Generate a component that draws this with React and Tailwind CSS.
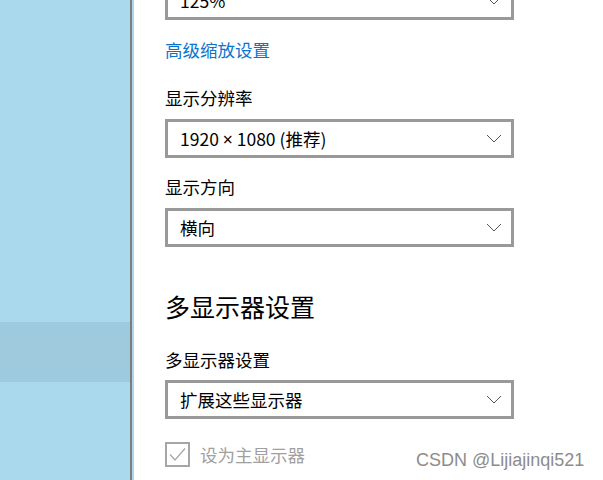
import React from 'react';

const font = { fontFamily: '"Noto Sans CJK SC", "Noto Sans", sans-serif' };

const Chevron = () => (
    <svg width="16" height="9" viewBox="0 0 16 9" className="shrink-0">
        <path d="M1 1 L8 8 L15 1" fill="none" stroke="#555" strokeWidth="1" />
    </svg>
);

// select box, Windows settings look
const Dropdown = ({ children, className = "" }) => (
    <div className={`w-[349px] h-[39px] border-[3px] border-[#999999] bg-white flex items-center justify-between pl-[12px] pr-[9px] ${className}`}>
        <span className="text-[17.5px] leading-[24px] text-black whitespace-nowrap">{children}</span>
        <Chevron />
    </div>
);

const App = () => {
    return (
        <div className="relative w-[603px] h-[480px] overflow-hidden flex bg-white" style={font}>
            {/* side nav */}
            <div className="w-[130px] shrink-0 bg-[#aad9ee] flex flex-col">
                <div className="h-[322px]" />
                <div className="h-[60px] bg-[#9fcadd]" />
            </div>
            <div className="w-[2px] shrink-0 bg-[#7d7d7d]" />
            <div className="w-[2px] shrink-0 bg-[#aad9ee]" />

            {/* settings column */}
            <div className="flex-1 pl-[31px] flex flex-col">
                <Dropdown className="mt-[-19px]">125%</Dropdown>

                <div className="mt-[18px] h-[24px] text-[17.5px] leading-[24px] text-[#0a74d0]">高级缩放设置</div>

                <div className="mt-[24px] h-[24px] text-[17.5px] leading-[24px] text-black">显示分辨率</div>
                <Dropdown className="mt-[9px]">
                    1920 <span className="font-['Noto_Sans']">×</span> 1080 (推荐)
                </Dropdown>

                <div className="mt-[17px] h-[24px] text-[17.5px] leading-[24px] text-black">显示方向</div>
                <Dropdown className="mt-[9px]">横向</Dropdown>

                <div className="mt-[42px] h-[34px] text-[25px] leading-[34px] text-black">多显示器设置</div>

                <div className="mt-[25px] h-[24px] text-[17.5px] leading-[24px] text-black">多显示器设置</div>
                <Dropdown className="mt-[8px]">扩展这些显示器</Dropdown>

                <div className="mt-[23px] flex items-center gap-[10px]">
                    <div className="w-[25px] h-[25px] border-[2px] border-[#a6a6a6] bg-white flex items-center justify-center">
                        <svg width="19" height="19" viewBox="0 0 19 19">
                            <path d="M2 9.5 L7 15 L17 3.5" fill="none" stroke="#a6a6a6" strokeWidth="1.2" />
                        </svg>
                    </div>
                    <span className="text-[17.5px] leading-[24px] text-[#a0a0a0]">设为主显示器</span>
                </div>
            </div>

            {/* watermark */}
            <div
                className="absolute left-[416px] top-[449px] text-[18px] leading-[22px] text-[#8c8c8c] whitespace-nowrap"
                style={{ fontFamily: '"Liberation Sans", Arial, sans-serif' }}
            >
                CSDN @Lijiajinqi521
            </div>
        </div>
    );
};

export default App;
